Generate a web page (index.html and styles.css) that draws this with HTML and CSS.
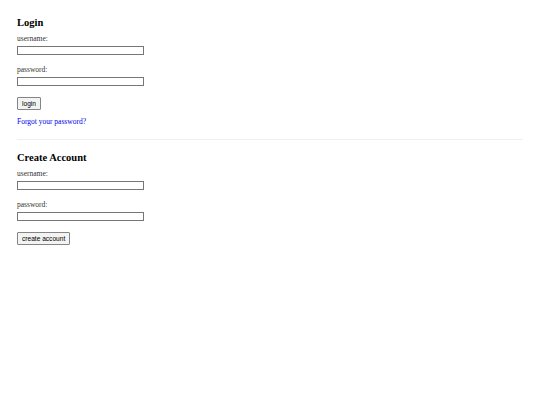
FILE: index.html
```html
<!DOCTYPE html>
<html>
<head>
<meta charset="utf-8">
<link rel="stylesheet" href="styles.css">
</head>
<body>
<div class="page">
  <section class="section">
    <h2 class="title">Login</h2>
    <div class="field">
      <label class="label">username:</label>
      <input class="input" type="text">
    </div>
    <div class="field">
      <label class="label">password:</label>
      <input class="input" type="password">
    </div>
    <button class="btn">login</button>
    <a class="link" href="#">Forgot your password?</a>
  </section>
  <hr class="divider">
  <section class="section">
    <h2 class="title">Create Account</h2>
    <div class="field">
      <label class="label">username:</label>
      <input class="input" type="text">
    </div>
    <div class="field">
      <label class="label">password:</label>
      <input class="input" type="password">
    </div>
    <button class="btn">create account</button>
  </section>
</div>
</body>
</html>
```
FILE: styles.css
```css
html, body {
  margin: 0;
  padding: 0;
  background: #fff;
}
.page {
  padding: 16px 17px 0 17px;
  font-family: "Liberation Serif", serif;
  color: #000;
}
.section {
  display: flex;
  flex-direction: column;
  align-items: flex-start;
}
.title {
  font-size: 10.5px;
  font-weight: bold;
  margin: 0 0 5px 0;
  line-height: 13px;
}
.field {
  display: flex;
  flex-direction: column;
  align-items: flex-start;
  margin-bottom: 10px;
}
.label {
  font-size: 7.5px;
  line-height: 10px;
  color: #333;
  margin-bottom: 2px;
}
.input {
  box-sizing: border-box;
  width: 127px;
  height: 9px;
  border: 1px solid #767676;
  padding: 0;
  margin: 0;
  background: #fff;
}
.btn {
  box-sizing: border-box;
  font-family: "Liberation Sans", sans-serif;
  font-size: 6.6px;
  height: 13px;
  padding: 0 4px;
  border: 1px solid #858585;
  background: #f3f3f3;
  border-radius: 1px;
  color: #000;
  margin: 1px 0 0 0;
}
.link {
  font-size: 7.5px;
  color: #0000ee;
  text-decoration: none;
  margin-top: 7px;
  line-height: 10px;
}
.divider {
  border: 0;
  height: 1px;
  background: #efefef;
  margin: 12px 0 11px 0;
  width: 506px;
}
```
